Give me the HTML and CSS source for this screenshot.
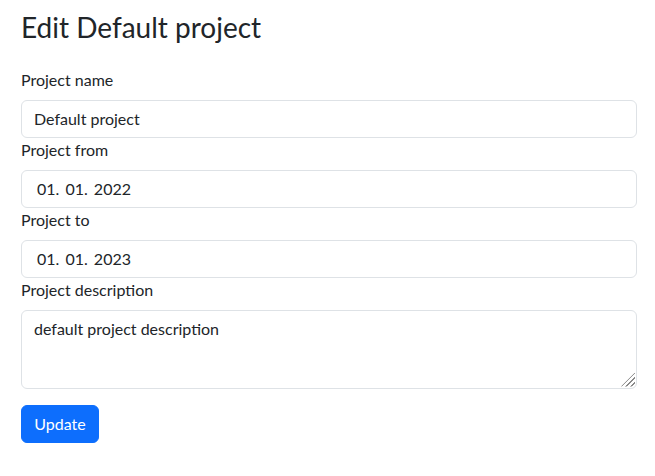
FILE: index.html
```html
<!DOCTYPE html>
<html lang="en">
<head>
<meta charset="utf-8">
<title>Edit Default project</title>
<link rel="stylesheet" href="styles.css">
</head>
<body>
<main class="page">
  <h3 class="title">Edit Default project</h3>
  <form class="form">
    <label class="label" for="name">Project name</label>
    <input class="control" id="name" type="text" value="Default project">
    <label class="label" for="from">Project from</label>
    <input class="control date" id="from" type="text" value="01. 01. 2022">
    <label class="label" for="to">Project to</label>
    <input class="control date" id="to" type="text" value="01. 01. 2023">
    <label class="label" for="desc">Project description</label>
    <div class="area-wrap">
      <textarea class="control area" id="desc">default project description</textarea>
    </div>
    <div class="actions"><button class="btn" type="button">Update</button></div>
  </form>
</main>
</body>
</html>
```
FILE: styles.css
```css
html, body { margin: 0; padding: 0; background: #fff; }
body {
  font-family: "Lato", "Noto Sans", sans-serif;
  font-size: 16px;
  line-height: 1.5;
  color: #212529;
}
.page { padding: 0 18px 0 21px; }
.title {
  font-size: 28px;
  font-weight: 400;
  line-height: 1.2;
  margin: 11px 0 23px;
}
.form { display: flex; flex-direction: column; }
.label { display: block; margin-bottom: 8px; height: 24px; }
.control {
  box-sizing: border-box;
  display: block;
  width: 100%;
  height: 38px;
  padding: 6px 12px;
  font: inherit;
  color: #212529;
  background: #fff;
  border: 1px solid #dee2e6;
  border-radius: 6px;
  outline: none;
  margin: 0;
}
.date { padding-left: 15px; word-spacing: 2px; }
.area-wrap { position: relative; }
.area { height: 79px; resize: none; }
.area-wrap::after {
  content: "";
  position: absolute;
  right: 2px;
  bottom: 2px;
  width: 14px;
  height: 14px;
  background: repeating-linear-gradient(135deg, transparent 0 2.2px, #8a8a8a 2.2px 3.4px);
  clip-path: polygon(100% 0, 100% 100%, 0 100%);
  pointer-events: none;
}
.actions { margin-top: 16px; }
.btn {
  font: inherit;
  color: #fff;
  background: #0d6efd;
  border: 1px solid #0d6efd;
  border-radius: 6px;
  padding: 6px 12px;
  height: 38px;
  width: 78px;
}
```
